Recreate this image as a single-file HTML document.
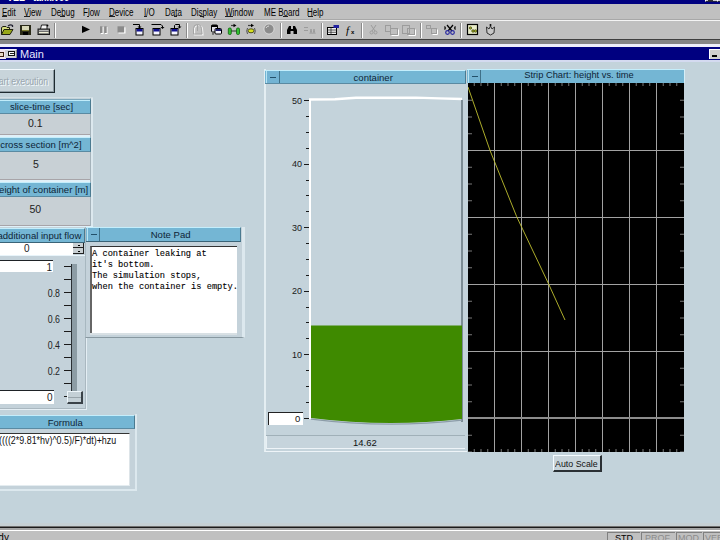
<!DOCTYPE html>
<html><head><meta charset="utf-8"><title>VEE</title>
<style>
*{margin:0;padding:0;box-sizing:border-box}
html,body{width:720px;height:540px;overflow:hidden;background:#c3d3db;font-family:"Liberation Sans",sans-serif;position:relative}
.a{position:absolute}
.t{position:absolute;white-space:nowrap;line-height:1}
.menu span{position:absolute;top:4px;font-size:10px;color:#000;white-space:nowrap;line-height:10px;transform:scaleX(0.8);transform-origin:0 0}
.hdr{position:absolute;background:#74b6d4;border-top:1px solid #c4eefc;border-bottom:1px solid #5a8aa2;border-right:1px solid #4a7a90;color:#0e2436;font-size:10px;text-align:center;line-height:12px;white-space:nowrap}
.val{position:absolute;background:#c8d0d5;color:#222;font-size:10.5px;text-align:center;white-space:nowrap}
.hs{width:200px;text-align:center}
.minbtn{position:absolute;background:#73b3d3;border-right:1px solid #3f7088;border-left:1px solid #b8e4f4}
.minbtn:after{content:"";position:absolute;left:3px;top:6px;width:6px;height:1px;background:#23506a}
</style></head><body>

<!-- app title bar -->
<div class="a" style="left:0;top:0;width:720px;height:4px;background:#000080;overflow:hidden">
  <div class="t" style="left:7px;top:-7px;font-size:10px;font-weight:bold;color:#fff;transform:scaleX(0.9);transform-origin:0 0">VEE - tank.vee</div>
  <div class="a" style="left:705px;top:0;width:12px;height:2px;background:#c8c8d0;border-left:1px solid #fff;border-bottom:1px solid #202040"></div>
<div class="a" style="left:708px;top:0;width:5px;height:1px;background:#303030"></div>
<div class="a" style="left:717px;top:0;width:3px;height:2px;background:#c8c8d0;border-left:1px solid #fff;border-bottom:1px solid #202040"></div>
</div>
<!-- menu bar -->
<div class="a menu" style="left:0;top:4px;width:720px;height:15px;background:#c0c0c0">
  <span style="left:2px">Edit</span>
  <span style="left:24px">View</span>
  <span style="left:51px">Debug</span>
  <span style="left:83px">Flow</span>
  <span style="left:109px">Device</span>
  <span style="left:144px">I/O</span>
  <span style="left:165px">Data</span>
  <span style="left:191px">Display</span>
  <span style="left:225px">Window</span>
  <span style="left:264px">ME Board</span>
  <span style="left:307px">Help</span>
</div>
<div class="a" style="left:2px;top:16px;width:5px;height:1px;background:#202020"></div><div class="a" style="left:24px;top:16px;width:6px;height:1px;background:#202020"></div><div class="a" style="left:60px;top:16px;width:5px;height:1px;background:#202020"></div><div class="a" style="left:87px;top:16px;width:2px;height:1px;background:#202020"></div><div class="a" style="left:109px;top:16px;width:6px;height:1px;background:#202020"></div><div class="a" style="left:144px;top:16px;width:3px;height:1px;background:#202020"></div><div class="a" style="left:174px;top:16px;width:3px;height:1px;background:#202020"></div><div class="a" style="left:200px;top:16px;width:4px;height:1px;background:#202020"></div><div class="a" style="left:225px;top:16px;width:8px;height:1px;background:#202020"></div><div class="a" style="left:283px;top:16px;width:5px;height:1px;background:#202020"></div><div class="a" style="left:308px;top:16px;width:5px;height:1px;background:#202020"></div>
<div class="a" style="left:0;top:19px;width:720px;height:1px;background:#a8a8a8"></div>
<div class="a" style="left:0;top:20px;width:720px;height:1px;background:#f4f4f4"></div>
<!-- toolbar -->
<div id="tb" class="a" style="left:0;top:21px;width:720px;height:18px;background:#c0c0c0"></div>
<div class="a" style="left:0;top:39px;width:720px;height:1px;background:#404040"></div>
<svg class="a" style="left:0;top:0" width="500" height="40" viewBox="0 0 500 40">
<!-- separators -->
<g stroke-width="1">
 <line x1="54.5" y1="23" x2="54.5" y2="38" stroke="#8a8a8a"/><line x1="55.5" y1="23" x2="55.5" y2="38" stroke="#fff"/>
 <line x1="186.5" y1="23" x2="186.5" y2="38" stroke="#8a8a8a"/><line x1="187.5" y1="23" x2="187.5" y2="38" stroke="#fff"/>
 <line x1="280.5" y1="23" x2="280.5" y2="38" stroke="#8a8a8a"/><line x1="281.5" y1="23" x2="281.5" y2="38" stroke="#fff"/>
 <line x1="321.5" y1="23" x2="321.5" y2="38" stroke="#8a8a8a"/><line x1="322.5" y1="23" x2="322.5" y2="38" stroke="#fff"/>
 <line x1="361.5" y1="23" x2="361.5" y2="38" stroke="#8a8a8a"/><line x1="362.5" y1="23" x2="362.5" y2="38" stroke="#fff"/>
 <line x1="420.5" y1="23" x2="420.5" y2="38" stroke="#8a8a8a"/><line x1="421.5" y1="23" x2="421.5" y2="38" stroke="#fff"/>
 <line x1="460.5" y1="23" x2="460.5" y2="38" stroke="#8a8a8a"/><line x1="461.5" y1="23" x2="461.5" y2="38" stroke="#fff"/>
</g>
<!-- open folder -->
<path d="M1.5,34.5 L1.5,27.5 L3,26.5 L6,26.5 L7,27.5 L9.5,27.5 L9.5,29.5" fill="#d8e080" stroke="#202010" stroke-width="1"/>
<path d="M1.5,34.5 L4,29.5 L13,29.5 L10,34.5 Z" fill="#98a818" stroke="#202010" stroke-width="1"/>
<path d="M8,26 Q10.5,24 12.5,25.5 L12.5,27" fill="none" stroke="#202030" stroke-width="1.3"/>
<!-- save -->
<rect x="20" y="25" width="11" height="10" fill="#2a2a18"/>
<rect x="22" y="26" width="7" height="4" fill="#d8d8b8"/>
<rect x="23" y="32" width="5" height="3" fill="#000"/>
<rect x="22" y="30" width="7" height="1" fill="#7a7a30"/>
<!-- print -->
<path d="M40.5,29 L41.5,25 L47,25 L47,29" fill="#f4f4f4" stroke="#222" stroke-width="1"/>
<circle cx="47.5" cy="25.5" r="0.9" fill="#000"/>
<rect x="38" y="29" width="11.5" height="5.5" fill="#707070" stroke="#1a1a1a" stroke-width="1"/>
<rect x="39" y="30" width="9.5" height="1" fill="#b8b8b8"/>
<rect x="39" y="32" width="9.5" height="1.2" fill="#f0f0d8"/>
<!-- play -->
<path d="M82,25.8 L90,29.4 L82,33 Z" fill="#000"/>
<!-- pause disabled -->
<rect x="101" y="27" width="2.5" height="7" fill="#fff"/><rect x="105" y="27" width="2.5" height="7" fill="#fff"/>
<rect x="100" y="26.3" width="2.5" height="6.7" fill="#8c8c8c"/><rect x="104.2" y="26.3" width="2.5" height="6.7" fill="#8c8c8c"/>
<!-- stop disabled -->
<rect x="118.5" y="27.3" width="7" height="6.2" fill="#fff"/>
<rect x="117.5" y="26.3" width="6.7" height="6.2" fill="#8a8a8a"/>
<!-- step into -->
<g stroke="#000" fill="none" stroke-width="1"><path d="M133,24.5 L139.5,24.5 L139.5,28"/></g>
<path d="M137.5,26.5 L141.5,26.5 L139.5,28.5Z" fill="#000"/>
<rect x="136" y="28.5" width="7" height="6.5" fill="#f4f4ff" stroke="#000" stroke-width="1"/><rect x="136.5" y="29" width="6" height="2.5" fill="#101090"/>
<!-- step over -->
<g stroke="#000" fill="none" stroke-width="1"><path d="M151.5,24.5 L161,24.5 L162.5,26 L162.5,27.5"/></g>
<path d="M160.5,27 L164.5,27 L162.5,29Z" fill="#000"/>
<rect x="153" y="28.5" width="7" height="6.5" fill="#f4f4ff" stroke="#000" stroke-width="1"/><rect x="153.5" y="29" width="6" height="2.5" fill="#101090"/>
<!-- step out -->
<g stroke="#000" fill="none" stroke-width="1"><path d="M174.5,28 L174.5,25.5 L175.5,24.5 L179.5,24.5 L179.5,27"/></g>
<path d="M177.5,26.5 L181.5,26.5 L179.5,28.5Z" fill="#000"/>
<rect x="171" y="28.5" width="7" height="6.5" fill="#f4f4ff" stroke="#000" stroke-width="1"/><rect x="171.5" y="29" width="6" height="2.5" fill="#101090"/>
<!-- disabled hand -->
<path d="M194.5,35 L194.5,29.5 Q194.5,25.5 198.5,25.5 Q202.5,25.5 202.5,29.5 L203,35 Z" fill="none" stroke="#f4f4f4" stroke-width="1.2"/>
<path d="M193.5,34 L193.5,28.5 Q193.5,24.5 197.5,24.5 Q201.5,24.5 201.5,28.5 L202,34 Z M197.5,25 L197.5,31" fill="none" stroke="#a4a4a4" stroke-width="1"/>
<!-- windows overlap -->
<rect x="211.5" y="25" width="6" height="7" rx="1" fill="#e0e0e8" stroke="#000" stroke-width="1"/>
<rect x="211.5" y="25" width="6" height="2" fill="#000"/>
<rect x="215" y="28.5" width="6.5" height="5.5" rx="1" fill="#f4f4ff" stroke="#000" stroke-width="1"/>
<rect x="215.5" y="29" width="5.5" height="2" fill="#18186a"/>
<path d="M212,33.5 L214,33.5 L213,35Z" fill="#000"/>
<!-- green -->
<rect x="228.3" y="28" width="3" height="6.5" rx="1.2" fill="#30c030" stroke="#106010" stroke-width="0.8"/>
<rect x="236.5" y="28" width="3" height="6.5" rx="1.2" fill="#30c030" stroke="#106010" stroke-width="0.8"/>
<line x1="231" y1="31" x2="236.5" y2="31" stroke="#204020" stroke-width="1"/>
<path d="M231,25.5 L234,25.5" stroke="#404040" stroke-width="1.2"/><path d="M233.5,23.8 L236.5,25.5 L233.5,27.2Z" fill="#000"/>
<!-- yellow -->
<ellipse cx="251" cy="30.8" rx="3" ry="2" fill="#d8e020" stroke="#303010" stroke-width="0.8"/>
<path d="M247.5,28 Q246,31 247.5,34 M254.5,28 Q256,31 254.5,34" fill="none" stroke="#505050" stroke-width="1"/>
<path d="M248,25.5 L251.5,25.5" stroke="#404040" stroke-width="1.2"/><path d="M251,23.8 L254,25.5 L251,27.2Z" fill="#000"/>
<!-- gray circle -->
<circle cx="269" cy="29" r="5" fill="#8c8c8c" stroke="#f0f0f0" stroke-width="0.6"/>
<path d="M266,28 Q267,26 269,26" stroke="#d8d8d8" fill="none" stroke-width="1"/>
<!-- binoculars -->
<path d="M287,34 L287,30 L289,26 L291,26 L291,29 L293,29 L293,26 L295,26 L297,30 L297,34 L293.5,34 L293.5,31 L290.5,31 L290.5,34 Z" fill="#000"/>
<!-- find disabled -->
<g stroke="#9c9c9c" stroke-width="1" fill="none"><path d="M304,27.5 L308,27.5 M304,30.5 L308,30.5 M310,34 L311,29 L312,34 M313,34 L314,29 L315,34"/></g>
<!-- properties -->
<rect x="327.5" y="27.5" width="9" height="7" fill="#f0f0f0" stroke="#000" stroke-width="1"/>
<path d="M327.5,30 L336.5,30 M327.5,32.3 L336.5,32.3 M331,27.5 L331,34.5" stroke="#303030" stroke-width="0.8"/>
<rect x="333.5" y="25" width="5.5" height="3" fill="#2020a0"/>
<!-- fx -->
<text x="346" y="34" font-family="Liberation Serif" font-style="italic" font-size="11" fill="#000">f</text>
<text x="351" y="34" font-family="Liberation Sans" font-size="6" font-weight="bold" fill="#000">x</text>
<!-- cut disabled -->
<g stroke="#9c9c9c" stroke-width="1" fill="none"><path d="M371,25 L375,31 M376,25 L372,31"/><circle cx="371.5" cy="32.5" r="1.5"/><circle cx="375.5" cy="32.5" r="1.5"/></g>
<!-- copy disabled -->
<g stroke="#9c9c9c" stroke-width="1" fill="none"><rect x="385.5" y="25.5" width="5" height="6"/><rect x="390.5" y="28.5" width="7" height="6"/></g>
<g stroke="#fff" stroke-width="1" fill="none"><path d="M391.5,35.5 L398.5,35.5 L398.5,29.5"/></g>
<!-- paste disabled -->
<g stroke="#9c9c9c" stroke-width="1" fill="none"><rect x="402.5" y="25.5" width="7" height="8"/><rect x="407.5" y="28.5" width="7" height="6"/></g>
<g stroke="#fff" stroke-width="1" fill="none"><path d="M408.5,35.5 L415.5,35.5 L415.5,29.5"/></g>
<!-- disabled ? -->
<g stroke="#9c9c9c" stroke-width="1" fill="none"><rect x="426.5" y="25.5" width="4" height="3"/><rect x="431.5" y="28.5" width="5" height="5"/></g>
<g stroke="#fff" stroke-width="1" fill="none"><path d="M432.5,34.5 L437.5,34.5 L437.5,29.5"/></g>
<!-- scissors -->
<g fill="none" stroke-width="1.2"><path d="M447,25 L452,31 M453,25 L448,31" stroke="#000"/><circle cx="447.5" cy="32.5" r="1.8" stroke="#2828a0"/><circle cx="452.5" cy="32.5" r="1.8" stroke="#2828a0"/>
<path d="M444.5,26.5 Q446,28 444.5,29.5 M455.5,26.5 Q454,28 455.5,29.5" stroke="#000"/></g>
<!-- framed -->
<rect x="467.5" y="24.5" width="10" height="10" fill="#e8ecc8" stroke="#000" stroke-width="1.2"/>
<circle cx="470.5" cy="28" r="1.2" fill="#a0b020" stroke="#303010" stroke-width="0.6"/>
<circle cx="473" cy="31" r="1.3" fill="#a0b020" stroke="#303010" stroke-width="0.6"/><circle cx="475.5" cy="31" r="1.3" fill="#a0b020" stroke="#303010" stroke-width="0.6"/>
<!-- hand shield -->
<path d="M486.5,27 L489,29 L490.5,26 L492,29 L494.5,27 L494,33 L490.5,35 L487,33 Z" fill="#c8c8c8" stroke="#303030" stroke-width="1"/>
<circle cx="490.5" cy="25" r="1" fill="#000"/>
</svg>

<div class="a" style="left:0;top:40px;width:720px;height:4px;background:#858585"></div>
<div class="a" style="left:0;top:44px;width:720px;height:3px;background:#eeeefa"></div>

<!-- Main title bar -->
<div class="a" style="left:0;top:47px;width:720px;height:13px;background:#000080"></div>
<div class="a" style="left:0;top:49px;width:6px;height:10px;background:#f0e4f0"></div>
<div class="a" style="left:0;top:52px;width:4px;height:5px;background:#e8d8c8;border:1px solid #3a2010;border-left:none"></div>
<div class="a" style="left:5px;top:49px;width:12px;height:9px;background:#d0d0d8;border-top:1px solid #f4f4ff;border-right:1px solid #888"></div>
<div class="a" style="left:8px;top:51px;width:7px;height:5px;background:#fafafa;border:1px solid #101010"></div>
<div class="a" style="left:10px;top:53px;width:4px;height:1px;background:#202020"></div>
<div class="t" style="left:20px;top:49px;font-size:11px;color:#e8e8ff">Main</div>
<div class="a" style="left:709px;top:49px;width:11px;height:10px;background:#d0d0d0;border-top:1px solid #fff;border-left:1px solid #fff"></div><div class="a" style="left:712px;top:55px;width:5px;height:2px;background:#000"></div>
<div class="a" style="left:0;top:60px;width:720px;height:2px;background:#d4daf0"></div>


<!-- Start execution button -->
<div class="a" style="left:-10px;top:69px;width:65px;height:24px;background:#c8d4da;border-top:1px solid #f4fbff;border-right:1px solid #1e2a30;border-bottom:1px solid #1e2a30"></div>
<div class="a" style="left:-10px;top:70px;width:64px;height:22px;border-right:1px solid #8c9aa2;border-bottom:1px solid #8c9aa2"></div>
<div class="t" style="left:-51px;width:100px;text-align:right;top:78px;font-size:10px;color:#f4fbff;transform:scaleX(0.86);transform-origin:100% 0">Start execution</div>
<div class="t" style="left:-52px;width:100px;text-align:right;top:77px;font-size:10px;color:#9aa6ae;transform:scaleX(0.86);transform-origin:100% 0">Start execution</div>

<!-- constants -->
<div class="a" style="left:-10px;top:97px;width:103px;height:1px;background:#d4e0e6"></div>
<div class="a" style="left:90px;top:98px;width:1px;height:130px;background:#a4b2ba"></div>
<div class="a" style="left:91px;top:98px;width:2px;height:130px;background:#dce8ee"></div>

<div class="hdr" style="left:-10px;top:99px;width:101px;height:15px;border-top:1px solid #7ea8bc;box-shadow:inset 0 1px 0 #c0ecfa">
 <span class="t hs" style="left:-48.5px;top:2px;font-size:9.55px">slice-time [sec]</span></div>
<div class="val" style="left:-10px;top:114px;width:100px;height:21px;border-bottom:1px solid #a8a4a8"><span class="t" style="left:38px;top:4px;font-size:10.5px">0.1</span></div>
<div class="a" style="left:-10px;top:135px;width:100px;height:2px;background:#e0f0f8"></div>

<div class="hdr" style="left:-10px;top:137px;width:101px;height:15px">
 <span class="t hs" style="left:-49.15px;top:2px;font-size:9.55px">cross section [m^2]</span></div>
<div class="val" style="left:-10px;top:152px;width:100px;height:28px;border-bottom:1px solid #a8a4a8"><span class="t" style="left:43px;top:6.5px;font-size:10.5px">5</span></div>
<div class="a" style="left:-10px;top:180px;width:100px;height:2px;background:#e0f0f8"></div>

<div class="hdr" style="left:-10px;top:182px;width:101px;height:15px">
 <span class="t hs" style="left:-49px;top:2px;font-size:9.55px">height of container [m]</span></div>
<div class="val" style="left:-10px;top:197px;width:100px;height:29px;border-bottom:1px solid #a8a4a8"><span class="t" style="left:39.5px;top:6.5px;font-size:10.5px">50</span></div>
<div class="a" style="left:-10px;top:226px;width:103px;height:2px;background:#e0f0f8"></div>

<!-- slider panel: additional input flow -->
<div class="a" style="left:-10px;top:227px;width:97px;height:183px;background:#c4d2da;border-right:1px solid #e4eef4;border-bottom:1px solid #e4eef4;box-shadow:inset -1px -1px 0 #aab8c0"></div>
<div class="hdr" style="left:-10px;top:228px;width:95px;height:15px;border-bottom:1px solid #3a6478">
 <span class="t hs" style="left:-50.6px;top:1.5px;font-size:9.55px">additional input flow</span></div>
<div class="a" style="left:-10px;top:243px;width:83px;height:12px;background:#fff"></div>
<div class="t" style="left:24px;top:244px;font-size:10px;color:#222">0</div>
<div class="a" style="left:73px;top:243px;width:11px;height:5px;background:#c8cfd2;border-right:1px solid #222;border-bottom:1px solid #222"></div>
<div class="a" style="left:78px;top:245px;width:2px;height:1px;background:#000"></div>
<div class="a" style="left:73px;top:248px;width:11px;height:6px;background:#c8cfd2;border-right:1px solid #222;border-bottom:1px solid #222"></div>
<div class="a" style="left:78px;top:251px;width:2px;height:1px;background:#000"></div>
<div class="a" style="left:-10px;top:255px;width:95px;height:1px;background:#e8f4fa"></div>
<div class="a" style="left:-10px;top:260px;width:63px;height:12px;background:#fff;border-top:1px solid #1e2226"></div>
<div class="t" style="left:46.5px;top:263px;font-size:10px;color:#222">1</div>
<div class="a" style="left:-10px;top:390px;width:64px;height:14px;background:#fff;border-top:1px solid #1e2226"></div>
<div class="t" style="left:47px;top:393px;font-size:10px;color:#222">0</div>
<div class="a" style="left:71px;top:264px;width:6px;height:128px;background:#8c9ca4;border-left:1px solid #2a3034"></div>
<div class="a" style="left:64px;top:266px;width:7px;height:1px;background:#1a1a1a"></div>
<div class="a" style="left:64px;top:279px;width:7px;height:1px;background:#1a1a1a"></div>
<div class="a" style="left:64px;top:292px;width:7px;height:1px;background:#1a1a1a"></div>
<div class="a" style="left:64px;top:305px;width:7px;height:1px;background:#1a1a1a"></div>
<div class="a" style="left:64px;top:318px;width:7px;height:1px;background:#1a1a1a"></div>
<div class="a" style="left:64px;top:331px;width:7px;height:1px;background:#1a1a1a"></div>
<div class="a" style="left:64px;top:344px;width:7px;height:1px;background:#1a1a1a"></div>
<div class="a" style="left:64px;top:357px;width:7px;height:1px;background:#1a1a1a"></div>
<div class="a" style="left:64px;top:370px;width:7px;height:1px;background:#1a1a1a"></div>
<div class="a" style="left:64px;top:383px;width:7px;height:1px;background:#1a1a1a"></div>
<div class="a" style="left:64px;top:396px;width:7px;height:1px;background:#1a1a1a"></div>
<div class="t" style="left:10px;width:50px;text-align:right;top:289px;font-size:10px;color:#222;transform:scaleX(0.88);transform-origin:100% 0">0.8</div>
<div class="t" style="left:10px;width:50px;text-align:right;top:315px;font-size:10px;color:#222;transform:scaleX(0.88);transform-origin:100% 0">0.6</div>
<div class="t" style="left:10px;width:50px;text-align:right;top:341px;font-size:10px;color:#222;transform:scaleX(0.88);transform-origin:100% 0">0.4</div>
<div class="t" style="left:10px;width:50px;text-align:right;top:367px;font-size:10px;color:#222;transform:scaleX(0.88);transform-origin:100% 0">0.2</div>
<div class="a" style="left:67px;top:391px;width:16px;height:13px;background:#c4d0d6;border-top:1px solid #eef6fa;border-left:1px solid #eef6fa;border-right:2px solid #3a4248;border-bottom:2px solid #3a4248"></div>
<div class="a" style="left:68px;top:397px;width:13px;height:1px;background:#98a4aa"></div>

<!-- Note pad -->
<div class="a" style="left:85px;top:227px;width:160px;height:111px;background:#c4d2da;border-left:1px solid #a8b8c0;border-right:3px solid #dce8ee;border-bottom:1px solid #8898a0"></div>
<div class="hdr" style="left:86px;top:227px;width:155px;height:15px;border-bottom:1px solid #3a6478">
 <span class="t hs" style="left:-15.4px;top:2px;font-size:9.55px">Note Pad</span></div>
<div class="minbtn" style="left:87px;top:228px;width:13px;height:13px"></div>
<div class="a" style="left:90px;top:246px;width:147px;height:87px;background:#fff;border-top:1px solid #333;border-left:2px solid #666"></div>
<div class="a" style="left:90px;top:333px;width:147px;height:2px;background:#d8e0e4"></div>
<div class="t" style="left:92px;top:249px;font-family:'Liberation Mono',monospace;font-size:8.7px;line-height:11.1px;color:#000;-webkit-text-stroke:0.1px #000;white-space:pre">A container leaking at
it's bottom.
The simulation stops,
when the container is empty.</div>

<!-- Formula -->
<div class="a" style="left:-10px;top:414px;width:147px;height:77px;background:#c4d2da;border-right:2px solid #dce8ee;border-bottom:2px solid #dce8ee"></div>
<div class="hdr" style="left:-10px;top:415px;width:145px;height:14px;line-height:11px">
 <span class="t hs" style="left:-24.8px;top:1.5px;font-size:9.55px">Formula</span></div>
<div class="a" style="left:-10px;top:433px;width:140px;height:53px;background:#fff;border-top:1px solid #333;border-right:1px solid #dde4e8;border-bottom:1px solid #e4ecf0"></div>
<div class="t" style="left:-1.2px;top:436px;font-size:10px;color:#111;transform:scaleX(0.89);transform-origin:0 0">((((2*9.81*hv)^0.5)/F)*dt)+hzu</div>

<!-- container panel -->
<div class="a" style="left:264px;top:69px;width:203px;height:383px;background:#c4d3db;border-left:2px solid #e4eef2;border-bottom:1px solid #eef4f8"></div>
<div class="hdr" style="left:265px;top:70px;width:201px;height:14px">
 <span class="t hs" style="left:8.2px;top:2px;font-size:9.55px">container</span></div>
<div class="minbtn" style="left:266px;top:71px;width:14px;height:12px"></div>
<div class="a" style="left:304px;top:100.10px;width:7px;height:1px;background:#1a1a1a"></div>
<div class="t" style="left:252px;width:50px;text-align:right;top:96.80px;font-size:9px;color:#1a1a1a">50</div>
<div class="a" style="left:306px;top:115.98px;width:5px;height:1px;background:#1a1a1a"></div>
<div class="a" style="left:306px;top:131.87px;width:5px;height:1px;background:#1a1a1a"></div>
<div class="a" style="left:306px;top:147.75px;width:5px;height:1px;background:#1a1a1a"></div>
<div class="a" style="left:304px;top:163.64px;width:7px;height:1px;background:#1a1a1a"></div>
<div class="t" style="left:252px;width:50px;text-align:right;top:160.34px;font-size:9px;color:#1a1a1a">40</div>
<div class="a" style="left:306px;top:179.52px;width:5px;height:1px;background:#1a1a1a"></div>
<div class="a" style="left:306px;top:195.41px;width:5px;height:1px;background:#1a1a1a"></div>
<div class="a" style="left:306px;top:211.29px;width:5px;height:1px;background:#1a1a1a"></div>
<div class="a" style="left:304px;top:227.18px;width:7px;height:1px;background:#1a1a1a"></div>
<div class="t" style="left:252px;width:50px;text-align:right;top:223.88px;font-size:9px;color:#1a1a1a">30</div>
<div class="a" style="left:306px;top:243.06px;width:5px;height:1px;background:#1a1a1a"></div>
<div class="a" style="left:306px;top:258.95px;width:5px;height:1px;background:#1a1a1a"></div>
<div class="a" style="left:306px;top:274.84px;width:5px;height:1px;background:#1a1a1a"></div>
<div class="a" style="left:304px;top:290.72px;width:7px;height:1px;background:#1a1a1a"></div>
<div class="t" style="left:252px;width:50px;text-align:right;top:287.42px;font-size:9px;color:#1a1a1a">20</div>
<div class="a" style="left:306px;top:306.61px;width:5px;height:1px;background:#1a1a1a"></div>
<div class="a" style="left:306px;top:322.49px;width:5px;height:1px;background:#1a1a1a"></div>
<div class="a" style="left:306px;top:338.38px;width:5px;height:1px;background:#1a1a1a"></div>
<div class="a" style="left:304px;top:354.26px;width:7px;height:1px;background:#1a1a1a"></div>
<div class="t" style="left:252px;width:50px;text-align:right;top:350.96px;font-size:9px;color:#1a1a1a">10</div>
<div class="a" style="left:306px;top:370.14px;width:5px;height:1px;background:#1a1a1a"></div>
<div class="a" style="left:306px;top:386.03px;width:5px;height:1px;background:#1a1a1a"></div>
<div class="a" style="left:306px;top:401.91px;width:5px;height:1px;background:#1a1a1a"></div>
<div class="a" style="left:304px;top:417.80px;width:7px;height:1px;background:#1a1a1a"></div>
<div class="t" style="left:252px;width:50px;text-align:right;top:414.50px;font-size:9px;color:#1a1a1a">0</div>
<svg class="a" style="left:300px;top:94px" width="170" height="10"><polyline points="9,5.5 35,5.2 56,3.8 116,3.6 139,4.4 162,5" fill="none" stroke="#fff" stroke-width="2.4"/></svg>
<div class="a" style="left:309px;top:99px;width:2px;height:320px;background:#fff"></div>
<div class="a" style="left:461px;top:100px;width:2px;height:322px;background:#7c8c94"></div>
<svg class="a" style="left:300px;top:320px" width="170" height="110"><path d="M11,5.5 L162,5.5 L162,99 Q87,107.5 11,98 Z" fill="#3f8a00"/><path d="M11,98 Q87,107.5 162,99" fill="none" stroke="#8c9ca8" stroke-width="1.2" transform="translate(0,1.2)"/></svg>
<div class="a" style="left:268px;top:412px;width:35px;height:13px;background:#fff;border-top:1.5px solid #222;border-left:1.5px solid #222"></div>
<div class="t" style="left:295px;top:414px;font-size:9.5px;color:#111">0</div>
<div class="a" style="left:266px;top:435px;width:199px;height:1px;background:#a0b0b8"></div>
<div class="a" style="left:266px;top:436px;width:199px;height:13px;background:#c6d4dc;border-left:1px solid #e8f0f4;border-bottom:1px solid #eef4f8"></div>
<div class="t" style="left:353px;top:438px;font-size:9.5px;color:#111">14.62</div>

<!-- strip chart -->
<div class="hdr" style="left:467px;top:69px;width:218px;height:14px;border-bottom:none;border-right:1px solid #d4eef8">
 <span class="t hs" style="left:12px;top:0.5px;font-size:9.3px">Strip Chart: height vs. time</span></div>
<div class="minbtn" style="left:468px;top:70px;width:13px;height:13px"></div>
<svg class="a" style="left:468px;top:83px" width="216" height="369" viewBox="0 0 216 369"><rect x="0" y="0" width="216" height="369" fill="#000"/><g stroke="#a2a2a2" stroke-width="1"><line x1="26.5" y1="0" x2="26.5" y2="369"/><line x1="53.5" y1="0" x2="53.5" y2="369"/><line x1="80.5" y1="0" x2="80.5" y2="369"/><line x1="107.5" y1="0" x2="107.5" y2="369"/><line x1="134.5" y1="0" x2="134.5" y2="369"/><line x1="161.5" y1="0" x2="161.5" y2="369"/><line x1="188.5" y1="0" x2="188.5" y2="369"/><line x1="0" y1="67.5" x2="216" y2="67.5"/><line x1="0" y1="134.5" x2="216" y2="134.5"/><line x1="0" y1="201.5" x2="216" y2="201.5"/><line x1="0" y1="268.5" x2="216" y2="268.5"/><line x1="0" y1="335" x2="216" y2="335" stroke="#8c8c8c" stroke-width="2"/></g><g stroke="#787878" stroke-width="1"><line x1="6.25" y1="0" x2="6.25" y2="3"/><line x1="6.25" y1="366" x2="6.25" y2="369"/><line x1="13.00" y1="0" x2="13.00" y2="3"/><line x1="13.00" y1="366" x2="13.00" y2="369"/><line x1="19.75" y1="0" x2="19.75" y2="3"/><line x1="19.75" y1="366" x2="19.75" y2="369"/><line x1="33.25" y1="0" x2="33.25" y2="3"/><line x1="33.25" y1="366" x2="33.25" y2="369"/><line x1="40.00" y1="0" x2="40.00" y2="3"/><line x1="40.00" y1="366" x2="40.00" y2="369"/><line x1="46.75" y1="0" x2="46.75" y2="3"/><line x1="46.75" y1="366" x2="46.75" y2="369"/><line x1="60.25" y1="0" x2="60.25" y2="3"/><line x1="60.25" y1="366" x2="60.25" y2="369"/><line x1="67.00" y1="0" x2="67.00" y2="3"/><line x1="67.00" y1="366" x2="67.00" y2="369"/><line x1="73.75" y1="0" x2="73.75" y2="3"/><line x1="73.75" y1="366" x2="73.75" y2="369"/><line x1="87.25" y1="0" x2="87.25" y2="3"/><line x1="87.25" y1="366" x2="87.25" y2="369"/><line x1="94.00" y1="0" x2="94.00" y2="3"/><line x1="94.00" y1="366" x2="94.00" y2="369"/><line x1="100.75" y1="0" x2="100.75" y2="3"/><line x1="100.75" y1="366" x2="100.75" y2="369"/><line x1="114.25" y1="0" x2="114.25" y2="3"/><line x1="114.25" y1="366" x2="114.25" y2="369"/><line x1="121.00" y1="0" x2="121.00" y2="3"/><line x1="121.00" y1="366" x2="121.00" y2="369"/><line x1="127.75" y1="0" x2="127.75" y2="3"/><line x1="127.75" y1="366" x2="127.75" y2="369"/><line x1="141.25" y1="0" x2="141.25" y2="3"/><line x1="141.25" y1="366" x2="141.25" y2="369"/><line x1="148.00" y1="0" x2="148.00" y2="3"/><line x1="148.00" y1="366" x2="148.00" y2="369"/><line x1="154.75" y1="0" x2="154.75" y2="3"/><line x1="154.75" y1="366" x2="154.75" y2="369"/><line x1="168.25" y1="0" x2="168.25" y2="3"/><line x1="168.25" y1="366" x2="168.25" y2="369"/><line x1="175.00" y1="0" x2="175.00" y2="3"/><line x1="175.00" y1="366" x2="175.00" y2="369"/><line x1="181.75" y1="0" x2="181.75" y2="3"/><line x1="181.75" y1="366" x2="181.75" y2="369"/><line x1="195.25" y1="0" x2="195.25" y2="3"/><line x1="195.25" y1="366" x2="195.25" y2="369"/><line x1="202.00" y1="0" x2="202.00" y2="3"/><line x1="202.00" y1="366" x2="202.00" y2="369"/><line x1="208.75" y1="0" x2="208.75" y2="3"/><line x1="208.75" y1="366" x2="208.75" y2="369"/><line x1="0" y1="17.25" x2="4" y2="17.25"/><line x1="212" y1="17.25" x2="216" y2="17.25"/><line x1="0" y1="34.00" x2="4" y2="34.00"/><line x1="212" y1="34.00" x2="216" y2="34.00"/><line x1="0" y1="50.75" x2="4" y2="50.75"/><line x1="212" y1="50.75" x2="216" y2="50.75"/><line x1="0" y1="84.25" x2="4" y2="84.25"/><line x1="212" y1="84.25" x2="216" y2="84.25"/><line x1="0" y1="101.00" x2="4" y2="101.00"/><line x1="212" y1="101.00" x2="216" y2="101.00"/><line x1="0" y1="117.75" x2="4" y2="117.75"/><line x1="212" y1="117.75" x2="216" y2="117.75"/><line x1="0" y1="151.25" x2="4" y2="151.25"/><line x1="212" y1="151.25" x2="216" y2="151.25"/><line x1="0" y1="168.00" x2="4" y2="168.00"/><line x1="212" y1="168.00" x2="216" y2="168.00"/><line x1="0" y1="184.75" x2="4" y2="184.75"/><line x1="212" y1="184.75" x2="216" y2="184.75"/><line x1="0" y1="218.25" x2="4" y2="218.25"/><line x1="212" y1="218.25" x2="216" y2="218.25"/><line x1="0" y1="235.00" x2="4" y2="235.00"/><line x1="212" y1="235.00" x2="216" y2="235.00"/><line x1="0" y1="251.75" x2="4" y2="251.75"/><line x1="212" y1="251.75" x2="216" y2="251.75"/><line x1="0" y1="285.25" x2="4" y2="285.25"/><line x1="212" y1="285.25" x2="216" y2="285.25"/><line x1="0" y1="302.00" x2="4" y2="302.00"/><line x1="212" y1="302.00" x2="216" y2="302.00"/><line x1="0" y1="318.75" x2="4" y2="318.75"/><line x1="212" y1="318.75" x2="216" y2="318.75"/><line x1="0" y1="352.25" x2="4" y2="352.25"/><line x1="212" y1="352.25" x2="216" y2="352.25"/><line x1="0" y1="369.00" x2="4" y2="369.00"/><line x1="212" y1="369.00" x2="216" y2="369.00"/></g><polyline points="0,4 22,67.4 48.7,133.7 80.3,200.3 97,237" fill="none" stroke="#c0c030" stroke-width="0.9"/></svg>
<div class="a" style="left:553px;top:455px;width:49px;height:17px;background:#c8d4da;border-top:1px solid #f4fbff;border-left:1px solid #f4fbff;border-right:2px solid #2a3034;border-bottom:2px solid #2a3034"></div>
<div class="t" style="left:555px;top:458.6px;font-size:9.5px;color:#111;transform:scaleX(0.93);transform-origin:0 0">Auto Scale</div>

<!-- status bar -->
<div class="a" style="left:0;top:523px;width:720px;height:3px;background:#c6d0d4"></div>
<div class="a" style="left:0;top:526px;width:720px;height:1px;background:#707070"></div>
<div class="a" style="left:0;top:527px;width:720px;height:1px;background:#1a1a1a"></div>
<div class="a" style="left:0;top:528px;width:720px;height:2px;background:#a4a4a4"></div>
<div class="a" style="left:0;top:530px;width:720px;height:10px;background:#c0c0c0"></div>
<div class="a" style="left:0;top:530px;width:720px;height:1px;background:#ffffff"></div>


<div class="t" style="left:-20px;top:533px;font-size:10px;color:#000">Ready</div>
<div class="a" style="left:607px;top:532px;width:33px;height:10px;border-top:1px solid #808080;border-left:1px solid #808080"></div>
<div class="t" style="left:615px;top:534px;font-size:9px;color:#000">STD</div>
<div class="a" style="left:641px;top:532px;width:34px;height:10px;border-top:1px solid #808080;border-left:1px solid #808080"></div>
<div class="t" style="left:645px;top:534px;font-size:9px;color:#8c8c8c">PROF</div>
<div class="a" style="left:676px;top:532px;width:26px;height:10px;border-top:1px solid #808080;border-left:1px solid #808080"></div>
<div class="t" style="left:678px;top:534px;font-size:9px;color:#8c8c8c">MOD</div>
<div class="a" style="left:703px;top:532px;width:20px;height:10px;border-top:1px solid #808080;border-left:1px solid #808080"></div>
<div class="t" style="left:705px;top:534px;font-size:9px;color:#8c8c8c">VER</div>
</body></html>
